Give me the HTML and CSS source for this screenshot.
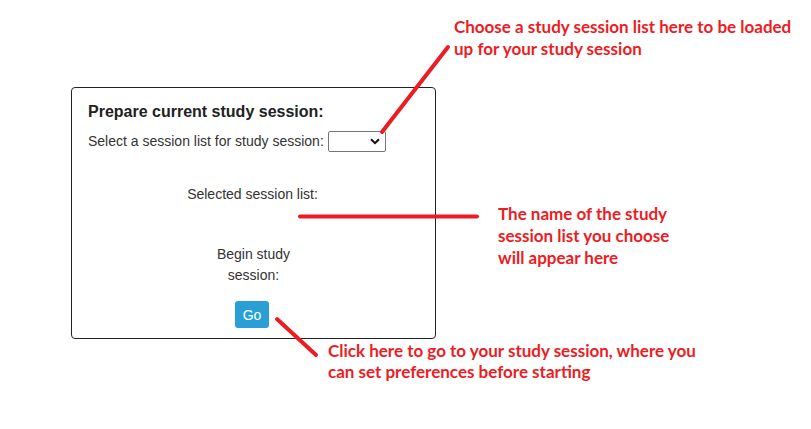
FILE: index.html
```html
<!DOCTYPE html>
<html>
<head>
<meta charset="utf-8">
<link rel="stylesheet" href="styles.css">
</head>
<body>
<div class="page">
  <div class="card">
    <h3 class="title">Prepare current study session:</h3>
    <div class="select-row">
      <label class="label">Select a session list for study session:</label>
      <div class="select">
        <svg class="chev" width="10" height="7" viewBox="0 0 10 7"><path d="M1 1.2 L5 5.2 L9 1.2" fill="none" stroke="#111" stroke-width="2"/></svg>
      </div>
    </div>
    <div class="selected">Selected session list:</div>
    <div class="begin">Begin study session:</div>
    <div class="btn-wrap"><button class="go">Go</button></div>
  </div>
</div>

<svg class="arrows" width="811" height="429" viewBox="0 0 811 429">
  <g stroke="#ed1c24" stroke-width="4" stroke-linecap="round" fill="none">
    <line x1="382" y1="132" x2="448" y2="47"/>
    <line x1="300" y1="216.5" x2="477" y2="216.5"/>
    <line x1="277" y1="319" x2="316" y2="355"/>
  </g>
</svg>

<div class="note note-1">Choose a study session list here to be loaded<br>up for your study session</div>
<div class="note note-2">The name of the study<br>session list you choose<br>will appear here</div>
<div class="note note-3">Click here to go to your study session, where you<br>can set preferences before starting</div>
</body>
</html>
```
FILE: styles.css
```css
html, body {
  margin: 0;
  padding: 0;
  background: #fff;
}
body {
  width: 811px;
  height: 429px;
  position: relative;
  overflow: hidden;
  font-family: "Liberation Sans", Arial, sans-serif;
  color: #333;
}
.page {
  padding: 87px 0 0 71px;
}
.card {
  box-sizing: border-box;
  width: 365px;
  height: 252px;
  border: 1px solid #222;
  border-radius: 4px;
  padding: 14px 16px 0 16px;
  display: flex;
  flex-direction: column;
}
.title {
  margin: 0;
  font-size: 16px;
  line-height: 20px;
  font-weight: bold;
  color: #222;
}
.select-row {
  margin-top: 9px;
  display: flex;
  align-items: center;
  gap: 4px;
  height: 20px;
}
.label {
  font-size: 14px;
  line-height: 20px;
}
.select {
  box-sizing: border-box;
  width: 58px;
  height: 21px;
  border: 1px solid #767676;
  border-radius: 2px;
  display: flex;
  align-items: center;
  justify-content: flex-end;
  padding-right: 5px;
}
.chev {
  display: block;
}
.selected {
  margin-top: 33px;
  font-size: 14px;
  line-height: 20px;
  text-align: center;
  padding-right: 2px;
}
.begin {
  margin: 40px auto 0 auto;
  width: 110px;
  font-size: 14px;
  line-height: 21px;
  text-align: center;
}
.btn-wrap {
  margin-top: 15px;
  display: flex;
  justify-content: center;
  padding-right: 3px;
}
.go {
  box-sizing: border-box;
  width: 34px;
  height: 27px;
  border: none;
  border-radius: 3px;
  background: #2a9fd6;
  color: #fff;
  font-family: "Liberation Sans", Arial, sans-serif;
  font-size: 14px;
  padding: 0;
}
.arrows {
  position: absolute;
  left: 0;
  top: 0;
  pointer-events: none;
}
.note {
  position: absolute;
  font-family: Lato, "Open Sans", sans-serif;
  font-weight: bold;
  font-size: 17px;
  line-height: 22px;
  color: #ed1c24;
  white-space: nowrap;
}
.note-1 { left: 454px; top: 16px; }
.note-2 { left: 498px; top: 203px; }
.note-3 { left: 328px; top: 340px; line-height: 21px; }
```
